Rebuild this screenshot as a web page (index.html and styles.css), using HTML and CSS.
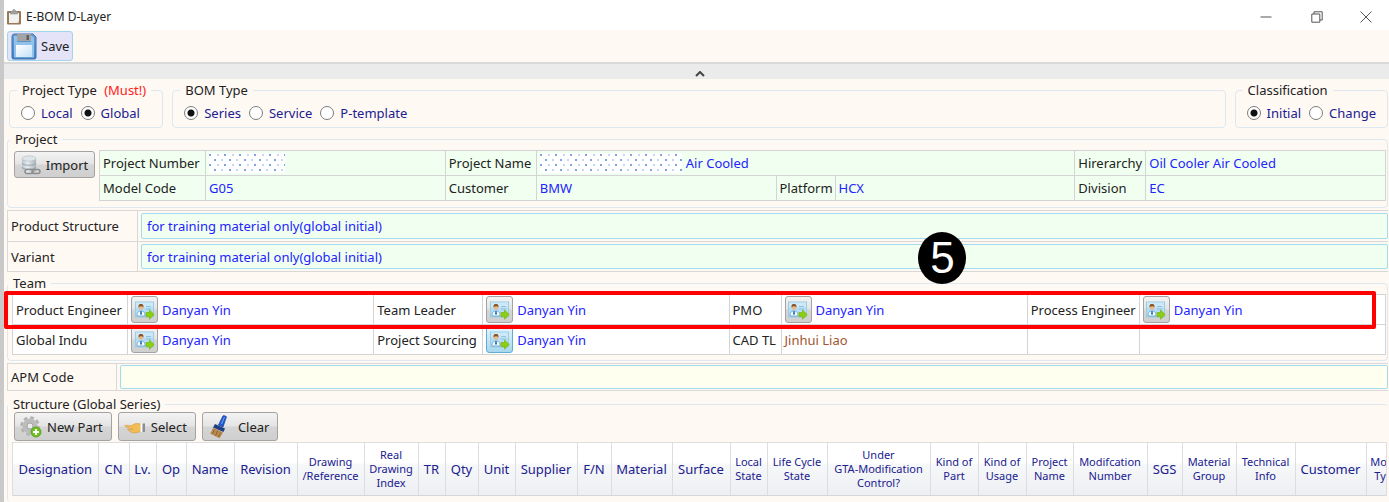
FILE: index.html
```html
<!DOCTYPE html>
<html lang="en">
<head>
<meta charset="utf-8">
<title>E-BOM D-Layer</title>
<link rel="stylesheet" href="styles.css">
</head>
<body>
<svg class="defs" aria-hidden="true">
  <defs>
    <linearGradient id="g-blue" x1="0" y1="0" x2="0" y2="1"><stop offset="0" stop-color="#6f9bd0"/><stop offset="1" stop-color="#3f7fbd"/></linearGradient>
    <linearGradient id="g-label" x1="0" y1="0" x2="1" y2="1"><stop offset="0" stop-color="#ffffff"/><stop offset="1" stop-color="#c4e0f6"/></linearGradient>
    <linearGradient id="g-grey" x1="0" y1="0" x2="1" y2="0"><stop offset="0" stop-color="#b9c4cc"/><stop offset=".4" stop-color="#e6ecf0"/><stop offset="1" stop-color="#a9b2b9"/></linearGradient>
    <symbol id="i-person" viewBox="0 0 20 20">
      <rect x=".5" y="2" width="18" height="15" fill="#b4dcf2" stroke="#9ccbe4"/>
      <path d="M1 2.500h17v5H1z" fill="#cde9f7"/>
      <path d="M2 16c0-4 1.500-5 4-5s4 1 4 5z" fill="#f4faff" stroke="#5d9fd0" stroke-width=".8"/>
      <path d="M5.400 11h1.200l.4 3-1 1-1-1z" fill="#2a6fb0"/>
      <circle cx="6" cy="7.500" r="2.300" fill="#e8b88a"/>
      <path d="M3.500 7.500c-.2-3 1-3.500 2.500-3.500s2.700.5 2.500 3.500c-1-1.500-3.500-1.800-5 0z" fill="#8a4f1d"/>
      <path d="M11 6.500h5M11 9h5" stroke="#8fc3e2"/>
      <path d="M11 12.500h3.500v-2.500l4.700 4.600-4.700 4.600v-2.500H11z" fill="#8ccf12" stroke="#76b510" stroke-width=".7"/>
    </symbol>
  </defs>
</svg>
<div class="window">
  <header class="titlebar">
    <svg class="app-icon" viewBox="0 0 16 16" aria-hidden="true">
      <rect x="1" y="2" width="14" height="13.500" rx="1" fill="#9a7858"/>
      <path d="M3 4h10v10H3z" fill="#f1f1ef"/>
      <path d="M13 12l-2 2h2z" fill="#c5c2bc"/>
      <path d="M4.500 5V2.500h2C6.500 1 7 .5 8 .5s1.500.5 1.500 2h2V5z" fill="#a3a3a3" stroke="#858585" stroke-width=".5"/>
    </svg>
    <h1 class="title">E-BOM D-Layer</h1>
    <div class="window-controls">
      <button type="button" aria-label="Minimize"><svg viewBox="0 0 12 12"><path d="M.5 6h11"/></svg></button>
      <button type="button" aria-label="Restore"><svg viewBox="0 0 12 12"><path d="M.8 3h8v8.200h-8zM3 3V.8h8.200V9H9"/></svg></button>
      <button type="button" aria-label="Close"><svg viewBox="0 0 12 12"><path d="M.5.5l11 11M11.500.5l-11 11"/></svg></button>
    </div>
  </header>

  <div class="toolbar">
    <button type="button" class="save">
      <svg viewBox="0 0 26 27" aria-hidden="true">
        <path d="M1 3.500Q1 1 3.500 1H22l3 3v20.500Q25 26 23.500 26H2.500Q1 26 1 24.500z" fill="url(#g-blue)" stroke="#3f74b4"/>
        <path d="M3 3h3v6h14V3h1l2 2v19.500H3z" fill="#8fc3ec"/>
        <rect x="6" y="1" width="14" height="7" fill="#a4a4a4"/><rect x="15.500" y="2" width="2.500" height="5" fill="#5f5f5f"/>
        <rect x="5" y="12" width="16" height="12" fill="url(#g-label)"/>
      </svg>
      <span>Save</span>
    </button>
  </div>
  <button type="button" class="collapse" aria-label="Collapse toolbar"><svg viewBox="0 0 10 6"><path d="M1 5l4-4 4 4"/></svg></button>

  <main>
    <div class="types">
      <fieldset class="options">
        <legend>Project Type <span class="must">(Must!)</span></legend>
        <div class="radios">
          <label><input type="radio" name="ptype">Local</label>
          <label><input type="radio" name="ptype" checked>Global</label>
        </div>
      </fieldset>
      <fieldset class="options grow">
        <legend>BOM Type</legend>
        <div class="radios">
          <label><input type="radio" name="btype" checked>Series</label>
          <label><input type="radio" name="btype">Service</label>
          <label><input type="radio" name="btype">P-template</label>
        </div>
      </fieldset>
      <fieldset class="options">
        <legend>Classification</legend>
        <div class="radios">
          <label><input type="radio" name="class" checked>Initial</label>
          <label><input type="radio" name="class">Change</label>
        </div>
      </fieldset>
    </div>

    <fieldset class="project">
      <legend>Project</legend>
      <div class="project-body">
        <button type="button" class="btn import">
          <svg viewBox="0 0 20 20" aria-hidden="true">
            <path d="M1 3.500v12C1 19 15 19 15 15.500v-12z" fill="url(#g-grey)"/>
            <ellipse cx="8" cy="3.500" rx="7" ry="2.600" fill="#dfe6ea" stroke="#b2bcc3" stroke-width=".6"/>
            <path d="M1 8c0 3 14 3 14 0M1 12c0 3 14 3 14 0" fill="none" stroke="#98a3ab"/>
            <rect x="4" y="14.500" width="8" height="4" rx="2" fill="none" stroke="#8d8d8d" stroke-width="1.500"/>
            <rect x="11" y="14.500" width="8" height="4" rx="2" fill="none" stroke="#8d8d8d" stroke-width="1.500"/>
          </svg>
          <span>Import</span>
        </button>
        <div class="project-details">
          <table class="details green">
            <colgroup><col class="w106"><col><col class="w91"><col><col class="w59"><col><col class="w71"><col></colgroup>
            <tr>
              <th scope="row">Project Number</th><td><span class="redacted short"></span></td>
              <th scope="row">Project Name</th><td colspan="3"><span class="redacted long"></span>Air Cooled</td>
              <th scope="row">Hirerarchy</th><td>Oil Cooler Air Cooled</td>
            </tr>
            <tr>
              <th scope="row">Model Code</th><td>G05</td>
              <th scope="row">Customer</th><td>BMW</td>
              <th scope="row">Platform</th><td>HCX</td>
              <th scope="row">Division</th><td>EC</td>
            </tr>
          </table>
        </div>
      </div>
    </fieldset>

    <div class="form-grid">
      <div class="form-row"><label for="structure">Product Structure</label><div class="field"><input id="structure" type="text" value="for training material only(global initial)"></div></div>
      <div class="form-row"><label for="variant">Variant</label><div class="field"><input id="variant" type="text" value="for training material only(global initial)"></div></div>
    </div>

    <div class="team-area">
      <fieldset class="team">
        <legend>Team</legend>
        <table class="details">
          <colgroup><col class="w115"><col><col class="w109"><col><col class="w52"><col><col class="w112"><col></colgroup>
          <tr>
            <th scope="row">Product Engineer</th><td><div class="person"><button type="button" class="btn pick" aria-label="Choose product engineer"><svg><use href="#i-person"/></svg></button>Danyan Yin</div></td>
            <th scope="row">Team Leader</th><td><div class="person"><button type="button" class="btn pick" aria-label="Choose team leader"><svg><use href="#i-person"/></svg></button>Danyan Yin</div></td>
            <th scope="row">PMO</th><td><div class="person"><button type="button" class="btn pick" aria-label="Choose PMO"><svg><use href="#i-person"/></svg></button>Danyan Yin</div></td>
            <th scope="row">Process Engineer</th><td><div class="person"><button type="button" class="btn pick" aria-label="Choose process engineer"><svg><use href="#i-person"/></svg></button>Danyan Yin</div></td>
          </tr>
          <tr>
            <th scope="row">Global Indu</th><td><div class="person"><button type="button" class="btn pick" aria-label="Choose global indu"><svg><use href="#i-person"/></svg></button>Danyan Yin</div></td>
            <th scope="row">Project Sourcing</th><td><div class="person"><button type="button" class="btn pick active" aria-label="Choose project sourcing"><svg><use href="#i-person"/></svg></button>Danyan Yin</div></td>
            <th scope="row">CAD TL</th><td class="brown">Jinhui Liao</td>
            <td></td><td></td>
          </tr>
        </table>
      </fieldset>
      <div class="highlight"></div>
      <div class="step">5</div>
    </div>

    <div class="form-grid apm">
      <div class="form-row"><label for="apm">APM Code</label><div class="field"><input id="apm" type="text"></div></div>
    </div>

    <fieldset class="structure">
      <legend>Structure (Global Series)</legend>
      <div class="actions">
        <button type="button" class="btn">
          <svg viewBox="0 0 22 22" aria-hidden="true">
            <circle cx="10" cy="10" r="8.300" fill="none" stroke="#b3b3b3" stroke-width="3" stroke-dasharray="3.600 2.916"/>
            <circle cx="10" cy="10" r="7.600" fill="#bcbcbc"/><circle cx="10" cy="10" r="3" fill="#ececec" stroke="#a5a5a5"/>
            <circle cx="16" cy="16" r="5" fill="#6fc21c" stroke="#4a9a10" stroke-width=".8"/><path d="M16 13v6M13 16h6" stroke="#fff" stroke-width="2"/>
          </svg><span>New Part</span>
        </button>
        <button type="button" class="btn">
          <svg viewBox="0 0 22 22" aria-hidden="true">
            <path d="M.8 9.500c2-.6 4 .4 6 .2 2-.6 3.500-2 6-2.200l4 .5v7.500c-2.500.4-4 1.600-7 1.400C6.500 16.500 5 15 3.500 13.500c2 .2 4 .3 5.500-.4C6 12.800 2 11.500.8 9.500z" fill="#f3bd55" stroke="#d3963a" stroke-width=".6"/>
            <rect x="16.500" y="7.500" width="2" height="8.500" fill="#fff"/><rect x="18.500" y="7.500" width="2.500" height="8.500" fill="#8d8d98"/>
          </svg><span>Select</span>
        </button>
        <button type="button" class="btn clear">
          <svg viewBox="0 0 20 24" aria-hidden="true">
            <path d="M14 .8q2-.6 3.500 1L14 12l-4.500-2z" fill="#1e59cf" stroke="#173f97" stroke-width=".7"/>
            <path d="M15.500 2l-3 7" stroke="#7ba6f2"/>
            <path d="M6 9l10 4.500-1.500 3.500L4 12.500z" fill="#1f3f82"/>
            <path d="M4 12.800l10 4.400c-1 2-2 4-3.500 6L1 18.500c1.200-1.500 2.300-3.500 3-5.700z" fill="#b98a52"/>
            <path d="M5.500 14.500L3.500 19M8.500 16l-2 5M11.500 17.500l-2 4.500" stroke="#86602f" stroke-width=".9"/>
          </svg><span>Clear</span>
        </button>
      </div>
      <div class="parts-view">
        <table class="parts">
          <colgroup>
            <col class="w85"><col class="w31"><col class="w27"><col class="w30"><col class="w48"><col class="w63"><col class="w67"><col class="w54"><col class="w27"><col class="w33"><col class="w37"><col class="w62"><col class="w34"><col class="w61"><col class="w58"><col class="w37"><col class="w60"><col class="w103"><col class="w48"><col class="w48"><col class="w47"><col class="w74"><col class="w35"><col class="w54"><col class="w59"><col class="w71"><col class="w41">
          </colgroup>
          <thead>
            <tr>
              <th>Designation</th><th>CN</th><th>Lv.</th><th>Op</th><th>Name</th><th>Revision</th>
              <th class="small">Drawing<br>/Reference</th><th class="small">Real<br>Drawing<br>Index</th>
              <th>TR</th><th>Qty</th><th>Unit</th><th>Supplier</th><th>F/N</th><th>Material</th><th>Surface</th>
              <th class="small">Local<br>State</th><th class="small">Life Cycle<br>State</th><th class="small">Under<br>GTA-Modification<br>Control?</th>
              <th class="small">Kind of<br>Part</th><th class="small">Kind of<br>Usage</th><th class="small">Project<br>Name</th><th class="small">Modifcation<br>Number</th>
              <th>SGS</th><th class="small">Material<br>Group</th><th class="small">Technical<br>Info</th><th>Customer</th><th class="small">Model<br>Type</th>
            </tr>
          </thead>
        </table>
      </div>
    </fieldset>
  </main>
</div>
</body>
</html>
```

FILE: styles.css
```css
* { box-sizing: border-box; }
html, body { height: 100%; }
body {
  margin: 0;
  overflow: hidden;
  background: #fff9f4;
  color: #222;
  font: 13px/20px "Noto Sans", "Open Sans", sans-serif;
}
button, input { font: inherit; color: inherit; }
button { padding: 0; cursor: pointer; }
svg { display: block; flex: none; }
.defs { position: absolute; width: 0; height: 0; }

.window {
  min-height: 100%;
  display: flex;
  flex-direction: column;
  border-left: 4px solid #c9c9c9;
}
.titlebar {
  display: flex;
  align-items: center;
  gap: 4px;
  height: 30px;
  padding: 4px 0 0 2px;
  background: #fff;
}
.app-icon { width: 16px; height: 16px; }
.title { margin: 0; font-size: 12px; font-weight: 400; }
.window-controls { display: flex; margin-left: auto; }
.window-controls button {
  display: grid;
  place-items: center;
  width: 51px;
  height: 26px;
  border: 0;
  background: none;
}
.window-controls button:last-child { width: 47px; }
.window-controls svg { width: 12px; height: 12px; fill: none; stroke: #555; }

.toolbar { display: flex; height: 32px; padding: 1px 3px; }
.save {
  display: flex;
  align-items: center;
  gap: 4px;
  padding: 0 3px;
  border: 1px solid #9fd6ee;
  border-radius: 3px;
  background: #e4e3f7;
}
.save svg { width: 26px; height: 27px; }
.collapse {
  display: grid;
  place-items: center;
  height: 17px;
  padding: 4px 0 0 6px;
  border: 0;
  border-top: 2px solid #d9d9d9;
  background: #ebebeb;
}
.collapse svg { width: 10px; height: 6px; fill: none; stroke: #444; stroke-width: 2; }

main { flex: 1; display: flex; flex-direction: column; padding: 3px 1px 0 3px; }
fieldset {
  min-width: 0;
  margin: 0;
  padding: 0;
  border: 1px solid #dde8f0;
  border-radius: 4px;
}
legend { margin-left: -4px; padding: 0 5px; line-height: 16px; }
.must { margin-left: 4px; color: #ff2020; }

.types { display: flex; gap: 9px; padding-left: 2px; }
.options { padding: 5px 11px 4px; }
.options.grow { flex: 1; }
.radios { display: flex; gap: 8px; color: #20208f; }
.radios label { display: flex; align-items: center; gap: 6px; white-space: nowrap; }
input[type="radio"] {
  appearance: none;
  width: 14px;
  height: 14px;
  margin: 0;
  border: 1px solid #7d7d7d;
  border-radius: 50%;
  background: #fff;
}
input[type="radio"]:checked { background: radial-gradient(circle, #111 0 3px, #fff 4px); }

.project { margin-top: 3px; padding: 3px 1px 6px 6px; }
.project-body { display: flex; align-items: flex-start; gap: 4px; }
.project-details { flex: 1; min-width: 0; }
.btn {
  display: flex;
  align-items: center;
  justify-content: center;
  gap: 5px;
  border: 1px solid #a3a3a3;
  border-radius: 3px;
  background: linear-gradient(#f3f3f3, #e4e4e4 48%, #d5d5d5 52%, #cfcfcf);
  white-space: nowrap;
}
.import { width: 81px; height: 27px; margin-top: 1px; }
.import svg { width: 20px; height: 20px; }

.details {
  width: 100%;
  table-layout: fixed;
  border-collapse: collapse;
  background: #fff;
}
.details.green { background: #f0fff0; }
.details tr { height: 25px; }
.details th, .details td {
  padding: 0 3px;
  border: 1px solid #d4d4d4;
  font-weight: 400;
  text-align: left;
  white-space: nowrap;
}
.details td { color: #2323ff; }
.details td.brown { color: #a0562d; }
.redacted {
  display: inline-block;
  height: 20px;
  vertical-align: top;
  background:
    radial-gradient(circle at 1px 1px, #7ea3e0 1px, transparent 1px) 0 1px / 15px 10px,
    radial-gradient(circle at 1px 1px, #c6d6f2 1px, transparent 1px) 8px 1px / 15px 10px,
    radial-gradient(circle at 1px 1px, #7ea3e0 1px, transparent 1px) 5px 6px / 15px 10px,
    radial-gradient(circle at 1px 1px, #c6d6f2 1px, transparent 1px) 12px 6px / 15px 10px,
    #fff;
}
.redacted.short { width: 76px; }
.redacted.long { width: 142px; margin-right: 4px; }

.form-grid { margin-top: 2px; border: 1px solid #dad8d6; border-right: 0; }
.form-row { display: flex; height: 30px; }
.form-row + .form-row { border-top: 1px solid #dad8d6; }
.form-row label { width: 130px; padding-left: 3px; border-right: 1px solid #dad8d6; line-height: 30px; }
.field { flex: 1; display: flex; padding: 2px 0 2px 3px; }
.field input {
  flex: 1;
  min-width: 0;
  padding: 0 5px;
  border: 1px solid #a2dcee;
  border-radius: 2px;
  background: #f0fff0;
  color: #2323ff;
}

.team-area { position: relative; margin-top: 3px; }
.team { padding: 3px 1px 5px 4px; }
.team .details tr { height: 30px; }
.person { display: flex; align-items: center; gap: 4px; }
.pick { width: 27px; height: 27px; }
.pick svg { width: 20px; height: 20px; }
.pick.active { border-color: #62aed0; background: linear-gradient(#e6f5fc, #a6d8ef); }
.highlight {
  position: absolute;
  inset: 16px 12px auto -3px;
  height: 38px;
  border: 4px solid #fe0000;
  border-radius: 2px;
}
.step {
  position: absolute;
  top: -43px;
  left: 66%;
  width: 48px;
  height: 52px;
  border-radius: 50%;
  background: #000;
  color: #fff;
  font: 44px/52px "Liberation Sans", Arial, sans-serif;
  text-align: center;
}

.apm .form-row { height: 26px; }
.apm .form-row label { width: 109px; line-height: 26px; }
.apm .field { padding: 1px 0 1px 3px; }
.apm input { background: #fffff0; }

.structure {
  flex: 1;
  display: flex;
  flex-direction: column;
  margin-top: 5px;
  padding: 0 1px 0 4px;
  border-right: 0;
  border-bottom: 0;
}
.actions { display: flex; gap: 6px; padding-left: 2px; }
.actions .btn { height: 29px; padding: 0 8px 0 5px; }
.actions svg { width: 22px; height: 22px; }
.actions .clear { gap: 8px; }
.actions .clear svg { height: 24px; }
.parts-view {
  flex: 1;
  margin-top: 1px;
  overflow: hidden;
  border: 1px solid #dedede;
  border-bottom: 0;
}
.parts { width: 100%; table-layout: fixed; border-collapse: collapse; }
.parts th {
  height: 52px;
  padding: 0;
  border-right: 1px solid #dcdde0;
  border-bottom: 1px solid #d5d6d8;
  background: linear-gradient(#fff 0 38%, #f6f7f9 42%, #edeff2);
  color: #20208f;
  font-weight: 400;
  white-space: nowrap;
}
.parts th.small { font-size: 11px; line-height: 14px; }

.w27 { width: 27px; } .w30 { width: 30px; } .w31 { width: 31px; } .w33 { width: 33px; }
.w34 { width: 34px; } .w35 { width: 35px; } .w37 { width: 37px; } .w41 { width: 41px; }
.w47 { width: 47px; } .w48 { width: 48px; } .w52 { width: 52px; } .w54 { width: 54px; }
.w58 { width: 58px; } .w59 { width: 59px; } .w60 { width: 60px; } .w61 { width: 61px; }
.w62 { width: 62px; } .w63 { width: 63px; } .w67 { width: 67px; } .w71 { width: 71px; }
.w74 { width: 74px; } .w85 { width: 85px; } .w91 { width: 91px; } .w103 { width: 103px; }
.w106 { width: 106px; } .w109 { width: 109px; } .w112 { width: 112px; } .w115 { width: 115px; }
```
